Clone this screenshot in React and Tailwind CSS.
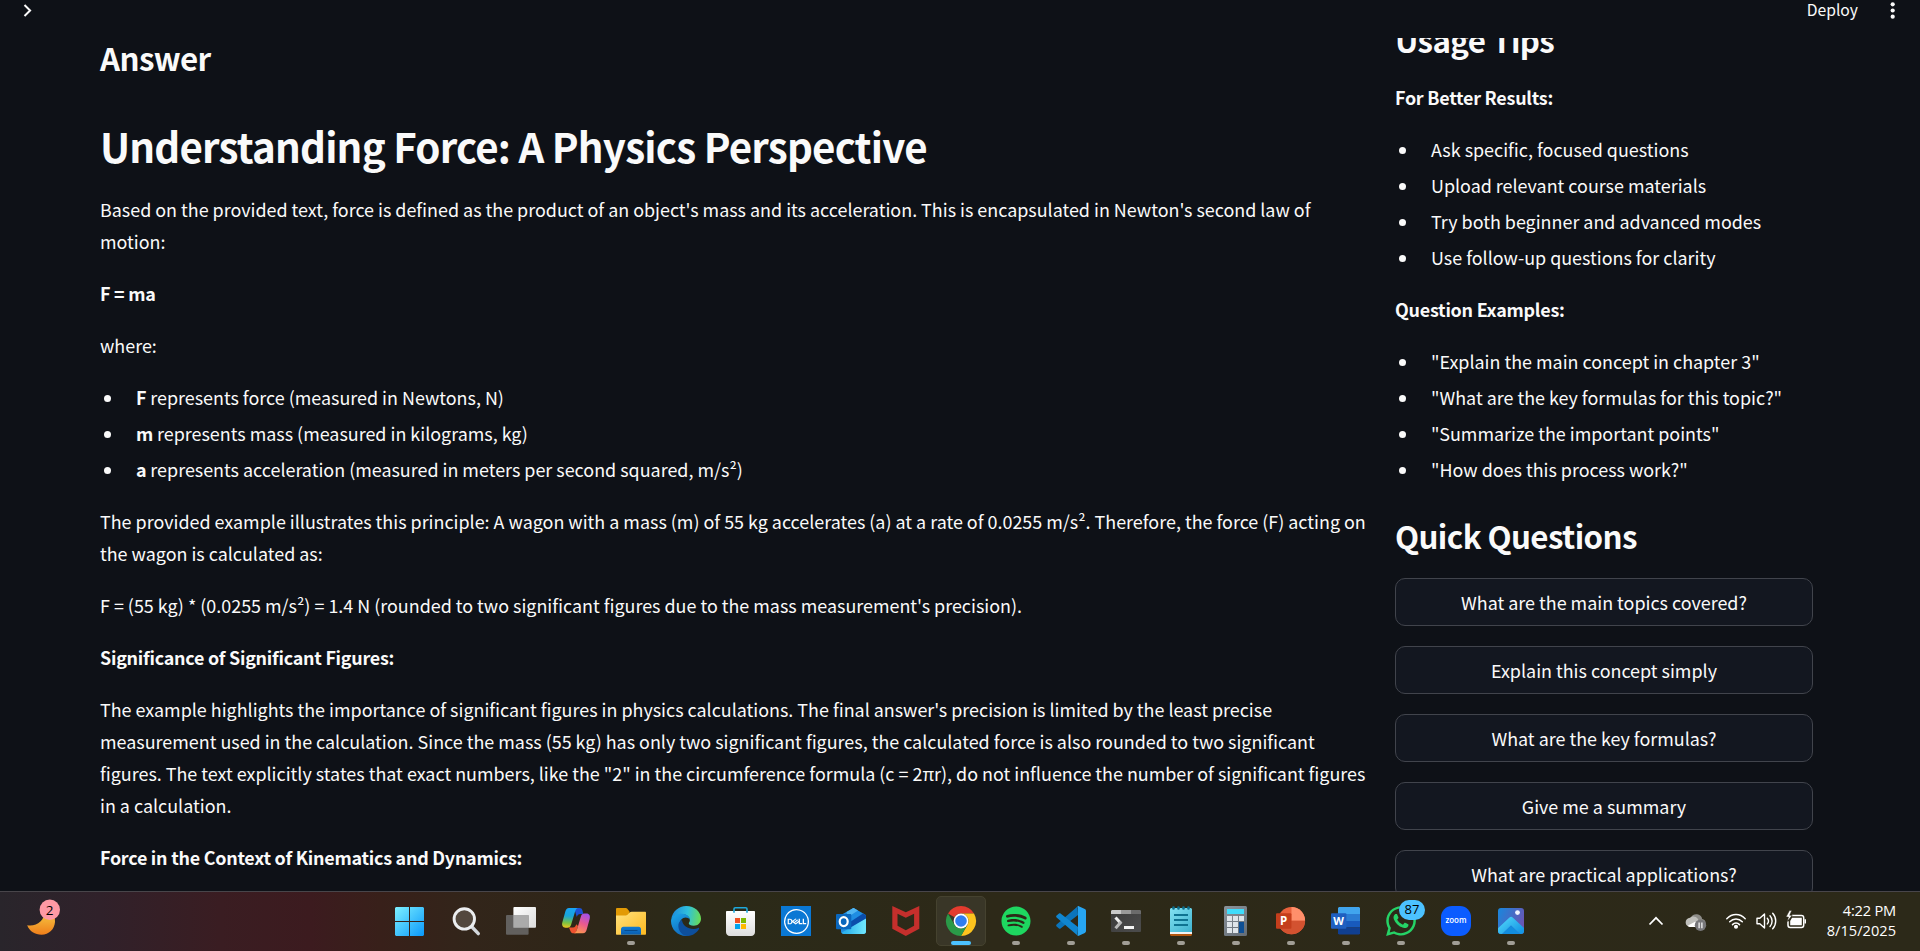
import React from "react";
import { FaSpotify, FaWhatsapp } from "react-icons/fa";
import { SiDell } from "react-icons/si";

const B = ({ children }) => <strong className="font-bold tracking-[-0.0133em]">{children}</strong>;

const P = ({ children }) => <p className="leading-8">{children}</p>;

function List({ items }) {
  return (
    <ul className="flex flex-col gap-1">
      {items.map((item, i) => (
        <li key={i} className="flex leading-8">
          <span className="mt-[14px] mr-[25px] ml-[4px] h-[7px] w-[7px] shrink-0 rounded-full bg-[#fafafa]" />
          <span>{item}</span>
        </li>
      ))}
    </ul>
  );
}

function Heading({ children }) {
  return <h3 className="text-[31.3px] leading-[42px] font-bold tracking-[-0.019em]">{children}</h3>;
}

function Header() {
  return (
    <header className="relative z-10 flex h-[38px] shrink-0 items-start justify-between bg-[#0e1117] pr-[24px] pl-[22px]">
      <svg className="mt-[4px] h-[13px] w-[10px]" viewBox="0 0 10 13" fill="none" stroke="#fafafa" strokeWidth="2">
        <path d="M2.500 1l5.600 5.500L2.500 12" />
      </svg>
      <div className="flex">
        <span className="mt-[-3px] mr-[32px] text-[15.7px] leading-[26px]">Deploy</span>
        <svg className="mt-[1px] h-[19px] w-[6px]" viewBox="0 0 6 19" fill="#fafafa">
          <circle cx="2.700" cy="3.300" r="2.100" />
          <circle cx="2.700" cy="9.500" r="2.100" />
          <circle cx="2.700" cy="15.700" r="2.100" />
        </svg>
      </div>
    </header>
  );
}

function Answer() {
  return (
    <article className="w-[1275px] shrink-0">
      <div className="mt-[-1px]">
        <Heading>Answer</Heading>
      </div>
      <h1 className="mt-10 text-[40.3px] leading-[54px] font-bold tracking-[-0.02em]">
        Understanding Force: A Physics Perspective
      </h1>
      <div className="mt-5 flex flex-col gap-5">
        <P>
          Based on the provided text, force is defined as the product of an object's mass and its acceleration. This is
          encapsulated in Newton's second law of motion:
        </P>
        <P><B>F = ma</B></P>
        <P>where:</P>
        <List
          items={[
            <><B>F</B> represents force (measured in Newtons, N)</>,
            <><B>m</B> represents mass (measured in kilograms, kg)</>,
            <><B>a</B> represents acceleration (measured in meters per second squared, m/s²)</>,
          ]}
        />
        <P>
          The provided example illustrates this principle: A wagon with a mass (m) of 55 kg accelerates (a) at a rate of
          0.0255 m/s². Therefore, the force (F) acting on the wagon is calculated as:
        </P>
        <P>F = (55 kg) * (0.0255 m/s²) = 1.4 N (rounded to two significant figures due to the mass measurement's precision).</P>
        <P><B>Significance of Significant Figures:</B></P>
        <P>
          The example highlights the importance of significant figures in physics calculations. The final answer's
          precision is limited by the least precise measurement used in the calculation. Since the mass (55 kg) has only
          two significant figures, the calculated force is also rounded to two significant figures. The text explicitly
          states that exact numbers, like the "2" in the circumference formula (c = 2πr), do not influence the number of
          significant figures in a calculation.
        </P>
        <P><B>Force in the Context of Kinematics and Dynamics:</B></P>
      </div>
    </article>
  );
}

const questions = [
  "What are the main topics covered?",
  "Explain this concept simply",
  "What are the key formulas?",
  "Give me a summary",
  "What are practical applications?",
];

function Sidebar() {
  return (
    <aside className="mt-[-19px] w-[418px] shrink-0">
      <Heading>Usage Tips</Heading>
      <div className="mt-5 flex flex-col gap-5">
        <P><B>For Better Results:</B></P>
        <List
          items={[
            "Ask specific, focused questions",
            "Upload relevant course materials",
            "Try both beginner and advanced modes",
            "Use follow-up questions for clarity",
          ]}
        />
        <P><B>Question Examples:</B></P>
        <List
          items={[
            '"Explain the main concept in chapter 3"',
            '"What are the key formulas for this topic?"',
            '"Summarize the important points"',
            '"How does this process work?"',
          ]}
        />
      </div>
      <div className="mt-[30px]">
        <Heading>Quick Questions</Heading>
      </div>
      <div className="mt-[21px] flex flex-col gap-5">
        {questions.map((q) => (
          <button
            key={q}
            className="flex h-12 w-full items-center justify-center rounded-[10px] border border-[#41444c] bg-[#131720] leading-8"
          >
            {q}
          </button>
        ))}
      </div>
    </aside>
  );
}

const Icon = ({ children }) => (
  <svg className="h-[30px] w-[30px] overflow-visible" viewBox="0 0 30 30" fill="none">
    {children}
  </svg>
);

const Start = () => (
  <Icon>
    <defs>
      <linearGradient id="st" x1="-1" y1="1" x2="28" y2="30" gradientUnits="userSpaceOnUse">
        <stop stopColor="#7df0ff" />
        <stop offset="1" stopColor="#0a98fb" />
      </linearGradient>
    </defs>
    <path fill="url(#st)" d="M0 1h13v14H-1V2zM14 1h13l1 1v13H14zM-1 16h14v14H0l-1-1zM14 16h14v13l-1 1H14z" />
  </Icon>
);

const Search = () => (
  <Icon>
    <path d="M21 21l6.3 6.6" stroke="#d3d7dc" strokeWidth="3.4" strokeLinecap="round" />
    <circle cx="13.3" cy="12.9" r="10.2" fill="#53483e" stroke="#eceef0" strokeWidth="2.9" />
  </Icon>
);

const TaskView = () => (
  <Icon>
    <defs>
      <linearGradient id="tv" x1="8" y1="1" x2="30" y2="22" gradientUnits="userSpaceOnUse">
        <stop stopColor="#fff" />
        <stop offset="1" stopColor="#dcdcdc" />
      </linearGradient>
    </defs>
    <rect x="7.4" y="1" width="22.6" height="20.7" rx="1" fill="url(#tv)" />
    <rect x="0" y="9" width="22.6" height="19.8" rx="1" fill="#6b6b6b" fillOpacity=".85" />
    <path d="M7.4 9h15.2v12.7H7.4z" fill="#ababab" />
  </Icon>
);

const Copilot = () => (
  <Icon>
    <defs>
      <linearGradient id="cpa" x1="8" y1="2" x2="6" y2="22" gradientUnits="userSpaceOnUse">
        <stop stopColor="#18a4f5" />
        <stop offset=".4" stopColor="#1aa6d8" />
        <stop offset=".75" stopColor="#7cc342" />
        <stop offset="1" stopColor="#f2c61d" />
      </linearGradient>
      <linearGradient id="cpb" x1="25" y1="7" x2="16" y2="27" gradientUnits="userSpaceOnUse">
        <stop stopColor="#a04ff0" />
        <stop offset=".5" stopColor="#e9598f" />
        <stop offset="1" stopColor="#ff9a4d" />
      </linearGradient>
    </defs>
    <path fill="#1c51d4" d="M13 2h5.5c1.5 0 2.5.9 2.9 2.300l1 3.600h-3c-2 0-3 1-3.600 3z" />
    <path fill="#ee5230" d="M8 21.500h4c2 0 2.700-1.500 3.200-3.200L17 20l-2.200 7.300h-2c-2 0-3-1-3.500-2.600z" />
    <path fill="url(#cpa)" d="M8 2h9.500c-2 0-2.800 1.700-3.400 3.600l-4 13.200c-.6 2-1.700 2.900-3.700 2.900H4.600C1.600 21.700.6 19.300 1.300 16.600L4.200 6C4.900 3.500 6 2 8 2z" />
    <path fill="url(#cpb)" d="M22 27.300h-9.500c2 0 2.800-1.700 3.400-3.600l4-13.200c.6-2 1.700-2.900 3.700-2.900h1.800c3 0 4 2.400 3.300 5.100L25.800 23.300c-.7 2.500-1.800 4-3.800 4z" />
  </Icon>
);

const Folder = () => (
  <Icon>
    <defs>
      <linearGradient id="fo" x1="4" y1="5" x2="24" y2="29" gradientUnits="userSpaceOnUse">
        <stop stopColor="#ffe07a" />
        <stop offset="1" stopColor="#fdbd28" />
      </linearGradient>
      <linearGradient id="fo2" x1="0" y1="21" x2="0" y2="29" gradientUnits="userSpaceOnUse">
        <stop stopColor="#0f7bd3" />
        <stop offset="1" stopColor="#0a5cac" />
      </linearGradient>
    </defs>
    <path d="M0 3.200C0 2.500.5 2 1.200 2h8.600c.5 0 1 .2 1.300.6L13.500 5.500V12H0z" fill="#e29a05" />
    <path d="M0 9.500h9c1.300 0 2-.3 2.800-1.100l1.600-1.600c.7-.7 1.300-1 2.300-1H29c.6 0 1 .4 1 1v21c0 .6-.4 1-1 1H1c-.6 0-1-.4-1-1z" fill="url(#fo)" />
    <path d="M5 28.800v-5.800c0-1.300 1-2.300 2.300-2.300h15.400c1.300 0 2.300 1 2.300 2.300v5.800z" fill="url(#fo2)" />
    <path d="M8.500 24.500h13" stroke="#084b8c" strokeWidth="1" />
  </Icon>
);

const Edge = () => (
  <Icon>
    <defs>
      <linearGradient id="eg1" x1="2" y1="8" x2="30" y2="12" gradientUnits="userSpaceOnUse">
        <stop stopColor="#1f8fdc" />
        <stop offset=".5" stopColor="#2fc0dd" />
        <stop offset="1" stopColor="#6ade52" />
      </linearGradient>
      <linearGradient id="eg2" x1="4" y1="8" x2="16" y2="30" gradientUnits="userSpaceOnUse">
        <stop stopColor="#1ba3e6" />
        <stop offset="1" stopColor="#0f62b8" />
      </linearGradient>
    </defs>
    <path fill="url(#eg1)" d="M.3 13C1.500 5.500 7.500 0 15.200 0 23.800 0 30 6 30 12.800c0 4.200-3.200 7-7.200 7-3.300 0-5-1.200-5-2.300 0-.8 1.100-1.200 1.100-3.400C18.900 10.800 15 8 10.600 8 5.500 8 1.600 10.500.3 13z" />
    <path fill="url(#eg2)" d="M0 15C.2 10.400 4.600 7.600 9.500 7.600c5.300 0 9.200 2.800 9.400 6.100-1-1.400-2.600-2.100-4.200-2.100-3.500 0-6 3-6 7 0 5 3.300 9.600 8.800 11.100-1 .2-1.700.3-2.500.3C6.700 30 0 23.300 0 15z" />
    <path fill="#0d4f9c" d="M11 14c-2.600 1-4 3.500-3.600 7 .6 5 4.600 9 9.600 8.900 4.800-.4 8.700-3.100 11-7 .5-.8-.1-1.300-.9-.9-1.300.7-2.900 1-4.500 1-6 0-11.100-3.500-11.600-9z" />
  </Icon>
);

const Store = () => (
  <Icon>
    <defs>
      <linearGradient id="sr" x1="0" y1="5" x2="0" y2="30" gradientUnits="userSpaceOnUse">
        <stop stopColor="#ffffff" />
        <stop offset="1" stopColor="#dedede" />
      </linearGradient>
    </defs>
    <path d="M0 5.700C0 5.300.3 5 .7 5h27.600c.4 0 .7.300.7.700V26c0 2.300-1.500 4-4 4H4c-2.500 0-4-1.700-4-4z" fill="url(#sr)" />
    <path d="M8 6.800V3c0-.8.500-1.300 1.300-1.300h10.400c.8 0 1.300.5 1.300 1.300v3.800" stroke="#1fa9dc" strokeWidth="1.6" />
    <path fill="#f25022" d="M9 12h5v5H9z" />
    <path fill="#7fba00" d="M15 12h5v5h-5z" />
    <path fill="#00a4ef" d="M9 18h5v5H9z" />
    <path fill="#ffb900" d="M15 18h5v5h-5z" />
  </Icon>
);

const Dell = () => (
  <span className="flex h-[30px] w-[30px] items-center justify-center bg-[#0a78d4]">
    <SiDell className="h-[25px] w-[25px] text-white" />
  </span>
);

const Outlook = () => (
  <Icon>
    <defs>
      <linearGradient id="ol" x1="10" y1="24" x2="28" y2="24" gradientUnits="userSpaceOnUse">
        <stop stopColor="#2fb4ee" />
        <stop offset="1" stopColor="#6be3fb" />
      </linearGradient>
    </defs>
    <path fill="#1f8de2" d="M5 9L16.500 2.400c.6-.4 1.400-.4 2 0L29 8.500c.6.400 1 1 1 1.700V25.500c0 1.500-1 2.500-2.500 2.500H8c-1.700 0-3-1-3-2.500z" />
    <path fill="#4fb5f2" d="M10.500 6l6-3.600c.6-.4 1.400-.4 2 0L22 4.500 12 11z" />
    <path fill="#0a4dab" d="M27 7.400l2 1.100c.6.400 1 1 1 1.700V13L14 22.500V16z" />
    <path fill="url(#ol)" d="M30 12.500v13c0 1.500-1 2.500-2.500 2.500H8c-1.200 0-2-.5-2.500-1.200z" />
    <rect y="8" width="15.300" height="15.300" rx="1" fill="#0a67bd" />
    <ellipse cx="7.700" cy="15.600" rx="4" ry="4.500" stroke="#fff" strokeWidth="2.200" />
  </Icon>
);

const Mcafee = () => (
  <Icon>
    <path fill="#c52f2c" d="M1.300 0l13.500 6.300L28.300 0v22.700L14.800 30 1.300 22.700zM6.500 7.800v11.900l8.300 4.600 8.300-4.600V7.800l-8.300 4z" fillRule="evenodd" />
  </Icon>
);

const Chrome = () => (
  <Icon>
    <path fill="#e33b2e" d="M2 7.500A15 15 0 0 1 28 7.500H15a7.500 7.500 0 0 0-6.500 3.700z" />
    <path fill="#fcc31e" d="M28 7.500A15 15 0 0 1 15 30l6.500-11.300A7.500 7.500 0 0 0 15 7.500z" />
    <path fill="#2a9a48" d="M15 30A15 15 0 0 1 2 7.500l6.500 11.200a7.500 7.500 0 0 0 13 0z" />
    <circle cx="15" cy="15" r="7.400" fill="#fff" />
    <circle cx="15" cy="15" r="5.800" fill="#2f7df0" />
  </Icon>
);

const Spotify = () => <FaSpotify className="h-[30px] w-[30px] text-[#1ed760]" />;

const VsCode = () => (
  <Icon>
    <path fill="#0b74bb" d="M21.500 0.500l.5 8.500L4.500 22.500c-.5.4-1 .4-1.500 0L.6 20.400c-.6-.6-.6-1.300 0-1.800z" />
    <path fill="#1086d0" d="M21.500 29.500l.5-8.500L4.500 7.500c-.5-.4-1-.4-1.500 0L.6 9.600c-.6.600-.6 1.300 0 1.800z" />
    <path fill="#27a5f2" d="M21.800 29.800c-.8-.2 .2-1 .2-2V2.200c0-1-1-2-.2-2 .3-.2.600-.2 1 0l6 2.900c.7.300 1.200 1 1.200 1.800v20.200c0 .8-.5 1.500-1.200 1.800l-6 2.900c-.4.200-.7.200-1 0z" />
  </Icon>
);

const Terminal = () => (
  <Icon>
    <defs>
      <linearGradient id="tm" x1="0" y1="8" x2="20" y2="28" gradientUnits="userSpaceOnUse">
        <stop stopColor="#3c3c3c" />
        <stop offset="1" stopColor="#4a4a4a" />
      </linearGradient>
    </defs>
    <rect y="4" width="30" height="22" rx="1" fill="url(#tm)" />
    <path fill="#c8c8c8" d="M1 4h9v4H0V5z" />
    <path fill="#999" d="M10 4h10v4H10z" />
    <path fill="#6b6b6b" d="M20 4h9l1 1v3H20z" />
    <path d="M4.500 11.500l5 5.500" stroke="#eee" strokeWidth="3" />
    <path d="M10.300 15.800l-5.800 6.500" stroke="#b9b9b9" strokeWidth="3" />
    <path fill="#f2f2f2" d="M13 20h10v3H13z" />
  </Icon>
);

const Notepad = () => (
  <Icon>
    <defs>
      <linearGradient id="np" x1="4" y1="2" x2="26" y2="26" gradientUnits="userSpaceOnUse">
        <stop stopColor="#83e2f2" />
        <stop offset="1" stopColor="#3fb2cf" />
      </linearGradient>
    </defs>
    <path fill="#b3570f" d="M4 26h22v3l-1 1H5l-1-1z" />
    <path fill="#f2f2f2" d="M4 24h22v4H4z" />
    <path fill="url(#np)" d="M4 3l1-1h20l1 1v23H4z" />
    <path d="M7.500 1.500v1M12.500 1.500v1M17.500 1.500v1M22.500 1.500v1" stroke="#0d6d8c" strokeWidth="2.600" strokeLinecap="round" />
    <path d="M8 9h14M8 14h14M8 19h14" stroke="#0f7391" strokeWidth="2" />
  </Icon>
);

const Calculator = () => (
  <Icon>
    <defs>
      <linearGradient id="cl" x1="3" y1="0" x2="26" y2="30" gradientUnits="userSpaceOnUse">
        <stop stopColor="#8b939b" />
        <stop offset="1" stopColor="#636c75" />
      </linearGradient>
    </defs>
    <rect x="3" width="23" height="30" rx="1.500" fill="url(#cl)" />
    <path fill="#3fdcfb" d="M6 3h17v5H6z" />
    <path fill="#dfe5ea" d="M6 10h5v5H6zM12 10h5v5h-5zM18 10h5v5h-5zM6 16h5v5H6zM12 16h5v5h-5zM6 22h5v5H6zM12 22h5v5h-5z" />
    <path fill="#0e4f95" d="M18 16h5v11h-5z" />
  </Icon>
);

const PowerPoint = () => (
  <Icon>
    <circle cx="15.500" cy="14.700" r="13.600" fill="#e8613c" />
    <path fill="#ff8f6b" d="M15.500 1.100a13.600 13.600 0 0 1 13.600 13.600H15.500z" />
    <path fill="#d35230" d="M29.100 14.700a13.600 13.600 0 0 1-27.200 0z" />
    <rect y="7.300" width="15.400" height="15.500" rx="1" fill="#c43e1c" />
    <text x="7.700" y="19.200" textAnchor="middle" fontSize="11.500" fontWeight="700" fontFamily="Open Sans, sans-serif" fill="#fff">P</text>
  </Icon>
);

const Word = () => (
  <Icon>
    <path fill="#41a5ee" d="M7 2l1-1h20l1 1v6H7z" />
    <path fill="#2b7cd3" d="M7 8h22v7H7z" />
    <path fill="#185abd" d="M7 15h22v6.500H7z" />
    <path fill="#103f91" d="M7 21.500h22v6l-1 .9H8l-1-.9z" />
    <rect y="7.300" width="15.400" height="15.500" rx="1" fill="#1f5fc0" />
    <text x="7.600" y="19" textAnchor="middle" fontSize="11" fontWeight="700" fontFamily="Open Sans, sans-serif" fill="#fff">W</text>
  </Icon>
);

const WhatsApp = () => (
  <span className="relative flex h-[30px] w-[30px] items-center justify-center">
    <FaWhatsapp className="h-[34px] w-[34px] shrink-0 text-[#25d366]" />
    <span className="absolute top-[-6px] left-[13px] flex h-5 w-[26px] items-center justify-center rounded-full bg-[#4cc2ff] font-['Open_Sans',sans-serif] text-[13px] text-black">
      87
    </span>
  </span>
);

const Zoom = () => (
  <Icon>
    <rect width="30" height="30" rx="11" fill="#0b5cff" />
    <text x="15" y="17.300" textAnchor="middle" fontSize="8.500" fontWeight="600" textLength="21" lengthAdjust="spacingAndGlyphs" fontFamily="Open Sans, sans-serif" fill="#fff">zoom</text>
  </Icon>
);

const Photos = () => (
  <Icon>
    <defs>
      <linearGradient id="ph" x1="2" y1="4" x2="28" y2="16" gradientUnits="userSpaceOnUse">
        <stop stopColor="#1a86dc" />
        <stop offset="1" stopColor="#6a55b4" />
      </linearGradient>
      <linearGradient id="ph2" x1="8" y1="10" x2="22" y2="28" gradientUnits="userSpaceOnUse">
        <stop stopColor="#4fd4f8" />
        <stop offset="1" stopColor="#1597e6" />
      </linearGradient>
      <clipPath id="phc">
        <rect x="2" y="2" width="26" height="26" rx="3" />
      </clipPath>
    </defs>
    <g clipPath="url(#phc)">
      <path fill="url(#ph)" d="M2 2h26v26H2z" />
      <path fill="url(#ph2)" d="M0 24L13.500 11.500c1-.9 2.200-.9 3.200 0L30 24v6h-4L15 19.500 4 30H0z" />
      <path fill="#128ddf" d="M15 19.500L27 31H3z" />
      <circle cx="21.500" cy="6.600" r="2.400" fill="#eef3ff" />
    </g>
  </Icon>
);

const apps = [
  { C: Start },
  { C: Search },
  { C: TaskView },
  { C: Copilot },
  { C: Folder, run: true },
  { C: Edge },
  { C: Store },
  { C: Dell },
  { C: Outlook },
  { C: Mcafee },
  { C: Chrome, active: true },
  { C: Spotify, run: true },
  { C: VsCode, run: true },
  { C: Terminal, run: true },
  { C: Notepad, run: true },
  { C: Calculator, run: true },
  { C: PowerPoint, run: true },
  { C: Word, run: true },
  { C: WhatsApp, run: true },
  { C: Zoom, run: true },
  { C: Photos, run: true },
];

function AppButton({ C, run, active }) {
  return (
    <div className="flex w-[55px] justify-center pt-1">
      <div
        className={
          active
            ? "flex h-[50px] w-[50px] flex-col items-center rounded-[5px] border border-[#45422f] bg-[#393627] pt-[9px]"
            : "flex h-[50px] w-[50px] flex-col items-center pt-[10px]"
        }
      >
        <C />
        {active && <span className="mt-[5px] h-1 w-5 shrink-0 rounded-full bg-[#4cc2ff]" />}
        {run && <span className="mt-[5px] h-1 w-2 shrink-0 rounded-full bg-[#a19e96]" />}
      </div>
    </div>
  );
}

function Weather() {
  return (
    <div className="w-[383.5px] shrink-0 pt-[7px] pl-[26px]">
      <svg className="h-[38px] w-[36px]" viewBox="26 899 36 38">
        <defs>
          <linearGradient id="mn" x1="0" y1="912" x2="0" y2="935" gradientUnits="userSpaceOnUse">
            <stop stopColor="#f6c944" />
            <stop offset="1" stopColor="#ef7d1a" />
          </linearGradient>
        </defs>
        <path fill="url(#mn)" d="M27.200 925.300C36 927 45 921 44.500 911h6c3.500 3 4.700 7 4.500 11-.5 7-6 12.800-13.500 12.800-6.500 0-12-3.500-14.300-9.500z" />
        <circle cx="49.800" cy="909.800" r="10.200" fill="#ff99a4" />
        <text x="49.500" y="914.700" textAnchor="middle" fontSize="13.500" fontFamily="Open Sans, sans-serif" fill="#000">2</text>
      </svg>
    </div>
  );
}

function Tray() {
  return (
    <div className="flex flex-1 justify-end pr-[24px]">
      <svg className="mt-[13px] h-[30px] w-[160px] shrink-0" viewBox="1648 905 160 30" fill="none" stroke="#fff">
        <path d="M1649.500 924.500l6.500-6.700 6.500 6.700" strokeWidth="1.700" />
        <g stroke="none">
          <path fill="#8d8c88" d="M1691 917.500a6 6 0 0 1 11.200 1.500 4.500 4.500 0 0 1 .8 8.500h-6z" />
          <path fill="#bfbfbb" d="M1690.500 927a4.600 4.600 0 0 1-.5-9.200c2-2 6-1.800 8 1.200l2 8z" />
          <path fill="#fff" d="M1688 925.500l7.500-4 3 5.500h-8c-1 0-2-.5-2.500-1.500z" />
          <circle cx="1700.500" cy="925.300" r="5.700" fill="#77777a" />
          <path fill="#fff" d="M1698.500 922.500h1.200v5.800h-1.200zM1701.300 922.500h1.200v5.800h-1.200z" />
        </g>
        <g strokeWidth="1.500" strokeLinecap="round">
          <path d="M1726.800 918.700c5.300-5.500 13.100-5.500 18.400 0M1729.700 921.800c3.600-3.700 9-3.700 12.600 0M1732.500 924.600c2-2 5-2 7 0" />
          <circle cx="1736" cy="926.700" r="1.300" fill="#fff" />
        </g>
        <g strokeWidth="1.400" strokeLinejoin="round" strokeLinecap="round">
          <path d="M1757 918.300h2.800l4.700-4.300v14l-4.700-4.300h-2.800z" />
          <path d="M1767.300 918.300c1.400 1.600 1.400 4 0 5.600M1770 915.700c2.800 3 2.800 7.700 0 10.700M1772.700 913.300c4 4.300 4 11.200 0 15.500" />
        </g>
        <path d="M1792 915.500h9.500c1.300 0 2.200.9 2.200 2.200v7.600c0 1.300-.9 2.200-2.200 2.200h-11.300c-1.300 0-2.200-.9-2.200-2.200v-4" strokeWidth="1.500" />
        <path d="M1792 917.700h9.800v7.600h-11.600V921z" fill="#fff" stroke="none" />
        <path d="M1804.500 919.200h1.500v4.300h-1.500z" fill="#fff" stroke="none" />
        <path d="M1789.500 910.500l-3.500 6.500h2.500l-1.300 4.500 5-6.200h-2.500l2-4.800z" fill="#fff" stroke="#2c2919" strokeWidth=".5" />
      </svg>
      <div className="flex w-[88px] flex-col items-end pt-[8px] font-['Open_Sans','Noto_Sans',sans-serif] text-[14.6px] leading-5 tracking-[0.02px] text-white">
        <span className="tracking-[-0.2px]">4:22 PM</span>
        <span>8/15/2025</span>
      </div>
    </div>
  );
}

function Taskbar() {
  return (
    <footer className="flex h-[60px] shrink-0 border-t border-[#48454a] bg-[linear-gradient(90deg,#29252b_0px,#30212a_100px,#3a1d22_220px,#3c1b1f_310px,#38201a_380px,#32251a_470px,#2f2618_570px,#2b2a18_690px,#2d2918_1000px,#2c2919_1920px)]">
      <Weather />
      <div className="flex w-[1155px] shrink-0">
        {apps.map((a, i) => (
          <AppButton key={i} {...a} />
        ))}
      </div>
      <Tray />
    </footer>
  );
}

export default function App() {
  return (
    <div className="flex h-[951px] w-[1920px] flex-col overflow-hidden bg-[#0e1117] font-['Noto_Sans_CJK_SC',sans-serif] text-[17.91px] text-[#fafafa]">
      <div className="flex h-[891px] shrink-0 flex-col overflow-hidden">
        <Header />
        <main className="flex gap-5 pl-[100px]">
          <Answer />
          <Sidebar />
        </main>
      </div>
      <Taskbar />
    </div>
  );
}
